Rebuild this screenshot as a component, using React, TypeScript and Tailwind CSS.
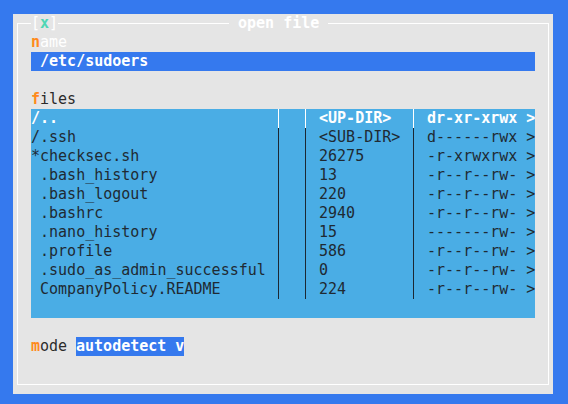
import React from "react";

const rows: [string, string, string][] = [
  ["/..", " <UP-DIR>", " dr-xr-xrwx >"],
  ["/.ssh", " <SUB-DIR>", " d------rwx >"],
  ["*checksec.sh", " 26275", " -r-xrwxrwx >"],
  [" .bash_history", " 13", " -r--r--rw- >"],
  [" .bash_logout", " 220", " -r--r--rw- >"],
  [" .bashrc", " 2940", " -r--r--rw- >"],
  [" .nano_history", " 15", " -------rw- >"],
  [" .profile", " 586", " -r--r--rw- >"],
  [" .sudo_as_admin_successful", " 0", " -r--r--rw- >"],
  [" CompanyPolicy.README", " 224", " -r--r--rw- >"],
];

function Sep({ white }: { white: boolean }) {
  return (
    <div className="w-[9px] h-[19px] flex justify-center shrink-0">
      <div className={white ? "w-px h-full bg-white" : "w-px h-full bg-[#1c2833]"} />
    </div>
  );
}

export default function App() {
  return (
    <div
      className="w-[568px] h-[404px] bg-[#3579ee] pt-[14px] pl-[13px] text-[15px] leading-[19px] whitespace-pre"
      style={{ fontFamily: '"DejaVu Sans Mono", monospace' }}
    >
      <div className="w-[540px] h-[380px] bg-[#e5e5e5] pt-[9px] pl-[4px]">
        <div className="relative w-[532px] h-[362px] border border-white pt-[9px] pl-[13px]">
          <div className="absolute top-[-10px] left-[13px] h-[19px] bg-[#e5e5e5] flex">
            <span className="text-white">[</span>
            <span className="text-[#4fd6b4] font-bold">x</span>
            <span className="text-white">]</span>
          </div>
          <div className="absolute top-[-10px] left-[211px] h-[19px] bg-[#e5e5e5] text-white font-bold">
            {" open file "}
          </div>

          <div className="h-[19px]">
            <span className="text-[#ff8a1c] font-bold">n</span>
            <span className="text-white">ame</span>
          </div>
          <div className="h-[19px] w-[504px] bg-[#3579ee] text-white font-bold">{" /etc/sudoers"}</div>
          <div className="h-[19px]" />
          <div className="h-[19px] text-[#2b2b2b]">
            <span className="text-[#ff8a1c] font-bold">f</span>
            <span>iles</span>
          </div>
          <div className="w-[504px] h-[209px] bg-[#4aade5] flex flex-col">
            {rows.map((r, i) => {
              const sel = i === 0;
              const tc = sel ? "text-white font-bold" : "text-[#1f2a33]";
              return (
                <div key={i} className={`flex h-[19px] ${tc}`}>
                  <div className="w-[243px] shrink-0 overflow-hidden">{r[0]}</div>
                  <Sep white={sel} />
                  <div className="w-[18px] shrink-0" />
                  <Sep white={sel} />
                  <div className="w-[99px] shrink-0 overflow-hidden">{r[1]}</div>
                  <Sep white={sel} />
                  <div className="w-[117px] shrink-0 overflow-hidden">{r[2]}</div>
                </div>
              );
            })}
          </div>
          <div className="h-[19px]" />
          <div className="h-[19px] flex text-[#2b2b2b]">
            <span className="text-[#ff8a1c] font-bold">m</span>
            <span className="w-[36px]">ode</span>
            <span className="bg-[#3579ee] text-white font-bold w-[108px]">autodetect v</span>
          </div>
        </div>
      </div>
    </div>
  );
}
